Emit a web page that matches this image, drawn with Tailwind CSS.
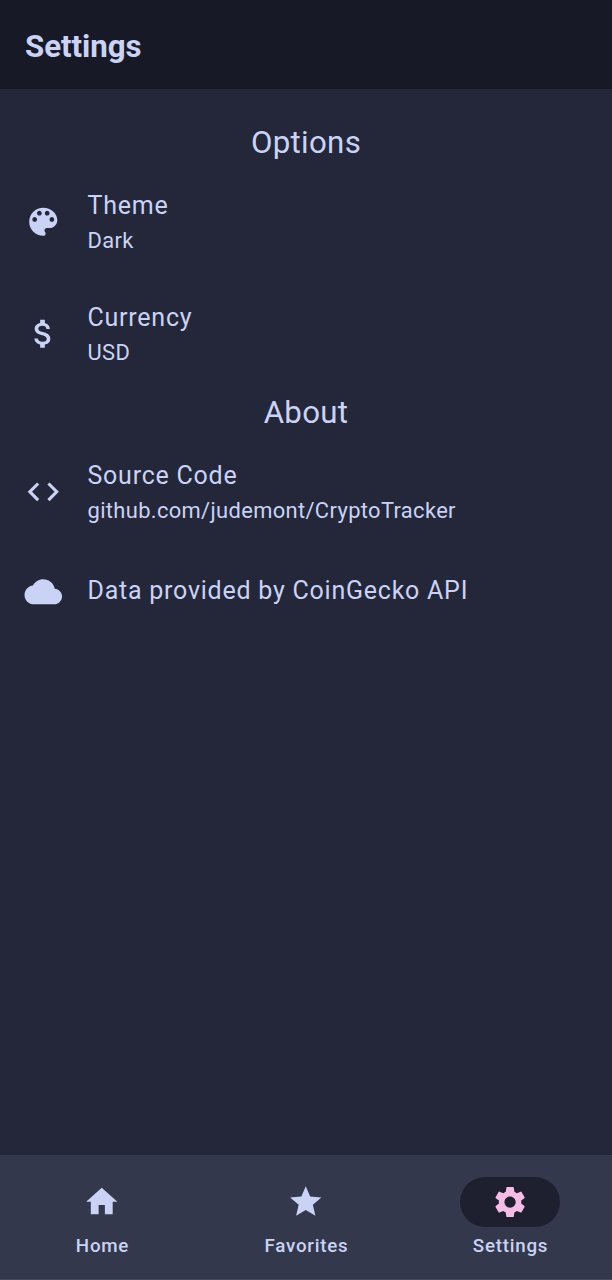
<!DOCTYPE html>
<html lang="en">
<head>
<meta charset="utf-8">
<meta name="viewport" content="width=device-width, initial-scale=1">
<title>Settings</title>
<script src="https://cdn.jsdelivr.net/npm/@tailwindcss/browser@4"></script>
</head>
<body class="h-[1280px] flex flex-col bg-[#24273a] text-[#cad3f5] font-['Roboto',sans-serif] overflow-hidden">
<header class="h-[89px] shrink-0 bg-[#181926] px-[25px] pt-[4px] flex items-center">
  <h1 class="text-[31.25px] leading-[40px] font-bold tracking-[-0.05px]">Settings</h1>
</header>
<main class="flex-1 pt-[34px]">
  <h2 class="h-[43px] text-center text-[31.25px] leading-[40px] tracking-[0.3px]">Options</h2>
  <div class="h-[112px] px-[25px] flex items-center gap-[25px]">
    <svg class="size-[37.5px] overflow-visible" viewBox="0.3 0 24 24" fill="currentColor"><path d="M12 3a9 9 0 0 0 0 18c.83 0 1.500-.67 1.500-1.500 0-.39-.15-.74-.39-1.010-.23-.26-.38-.61-.38-.99 0-.83.67-1.500 1.500-1.500H16c2.760 0 5-2.240 5-5 0-4.420-4.030-8-9-8zm-5.500 9c-.83 0-1.500-.67-1.500-1.500S5.670 9 6.500 9 8 9.670 8 10.500 7.330 12 6.500 12zm3-4C8.670 8 8 7.330 8 6.500S8.670 5 9.500 5s1.500.67 1.500 1.500S10.330 8 9.500 8zm5 0c-.83 0-1.500-.67-1.500-1.500S13.670 5 14.500 5s1.500.67 1.500 1.500S15.330 8 14.500 8zm3 4c-.83 0-1.500-.67-1.500-1.500S16.670 9 17.500 9s1.500.67 1.500 1.500-.67 1.500-1.500 1.500z"/></svg>
    <div><p class="text-[25px] leading-[35px] pb-[2px] tracking-[0.76px]">Theme</p><p class="text-[21.9px] leading-[32px] tracking-[0.35px]">Dark</p></div>
  </div>
  <div class="h-[113px] px-[25px] flex items-center gap-[25px]">
    <svg class="size-[37.5px] mb-[1px] overflow-visible" viewBox="0.3 0 24 24" fill="currentColor"><path d="M11.800 10.900c-2.270-.59-3-1.200-3-2.150 0-1.090 1.010-1.850 2.700-1.850 1.780 0 2.440.85 2.500 2.100h2.210c-.07-1.720-1.120-3.300-3.210-3.810V3h-3v2.160c-1.940.42-3.500 1.680-3.500 3.610 0 2.310 1.910 3.460 4.700 4.130 2.500.6 3 1.480 3 2.410 0 .69-.49 1.790-2.700 1.790-2.060 0-2.870-.92-2.980-2.100h-2.200c.12 2.190 1.760 3.420 3.680 3.830V21h3v-2.150c1.950-.37 3.500-1.500 3.500-3.550 0-2.840-2.430-3.810-4.700-4.400z"/></svg>
    <div><p class="text-[25px] leading-[35px] pb-[2px] tracking-[0.76px]">Currency</p><p class="text-[21.9px] leading-[32px] tracking-[0.35px]">USD</p></div>
  </div>
  <h2 class="mt-[2px] h-[43px] text-center text-[31.25px] leading-[40px] tracking-[0.3px]">About</h2>
  <div class="h-[112px] px-[25px] flex items-center gap-[25px]">
    <svg class="size-[37.5px] overflow-visible" viewBox="0.3 0 24 24" fill="currentColor"><path d="M9.400 16.600 4.800 12l4.600-4.600L8 6l-6 6 6 6 1.400-1.400zm5.200 0 4.600-4.600-4.600-4.600L16 6l6 6-6 6-1.400-1.400z"/></svg>
    <div><p class="text-[25px] leading-[35px] pb-[2px] tracking-[0.76px]">Source Code</p><p class="text-[21.9px] leading-[32px] tracking-[0.35px]">github.com/judemont/CryptoTracker</p></div>
  </div>
  <div class="h-[87px] px-[25px] flex items-center gap-[25px]">
    <svg class="size-[37.5px] overflow-visible" viewBox="0.3 0 24 24" fill="currentColor"><path d="M19.350 10.040C18.670 6.590 15.640 4 12 4 9.110 4 6.600 5.640 5.350 8.040 2.340 8.360 0 10.910 0 14c0 3.310 2.690 6 6 6h13c2.760 0 5-2.240 5-5 0-2.640-2.050-4.780-4.650-4.960z"/></svg>
    <p class="text-[25px] leading-[35px] pb-[2px] tracking-[0.76px]">Data provided by CoinGecko API</p>
  </div>
</main>
<nav class="h-[125px] shrink-0 bg-[#34384c] border-b border-[#454a62] pt-[22px] grid grid-cols-3 text-[18.75px] leading-[25px] font-medium tracking-[0.76px]">
  <div class="flex flex-col items-center gap-[7px]">
    <span class="w-[100px] h-[50px] rounded-full flex items-center justify-center"><svg class="size-[37.5px]" viewBox="0 0 24 24" fill="currentColor"><path d="M10 20v-6h4v6h5v-8h3L12 3 2 12h3v8z"/></svg></span>
    <span class="pl-[1px]">Home</span>
  </div>
  <div class="flex flex-col items-center gap-[7px]">
    <span class="w-[100px] h-[50px] rounded-full flex items-center justify-center"><svg class="size-[37.5px]" viewBox="0 0 24 24" fill="currentColor"><path d="M12 17.270 18.180 21l-1.640-7.030L22 9.240l-7.190-.61L12 2 9.190 8.630 2 9.240l5.460 4.730L5.820 21z"/></svg></span>
    <span class="pl-[1px]">Favorites</span>
  </div>
  <div class="flex flex-col items-center gap-[7px]">
    <span class="w-[100px] h-[50px] rounded-full bg-[#1e2030] text-[#f5bde6] flex items-center justify-center"><svg class="size-[37.5px]" viewBox="-0.2 -0.2 24 24" fill="currentColor"><path d="M19.140 12.940c.04-.3.06-.61.06-.94 0-.32-.02-.64-.07-.94l2.030-1.580c.18-.14.23-.41.12-.61l-1.920-3.320c-.12-.22-.37-.29-.59-.22l-2.390.96c-.5-.38-1.030-.7-1.620-.94l-.36-2.540c-.04-.24-.24-.41-.48-.41h-3.840c-.24 0-.43.17-.47.41l-.36 2.540c-.59.24-1.130.57-1.620.94l-2.390-.96c-.22-.08-.47 0-.59.22L2.740 8.870c-.12.21-.08.47.12.61l2.030 1.580c-.05.3-.09.63-.09.94s.02.64.07.94l-2.030 1.580c-.18.14-.23.41-.12.61l1.920 3.320c.12.22.37.29.59.22l2.390-.96c.5.38 1.030.7 1.620.94l.36 2.540c.05.24.24.41.48.41h3.840c.24 0 .44-.17.47-.41l.36-2.540c.59-.24 1.130-.56 1.620-.94l2.390.96c.22.08.47 0 .59-.22l1.920-3.320c.12-.22.07-.47-.12-.61l-2.010-1.580zM12 15.600c-1.980 0-3.600-1.620-3.600-3.600s1.620-3.600 3.600-3.600 3.600 1.620 3.600 3.600-1.620 3.600-3.600 3.600z"/></svg></span>
    <span class="pl-[1px]">Settings</span>
  </div>
</nav>
</body>
</html>
